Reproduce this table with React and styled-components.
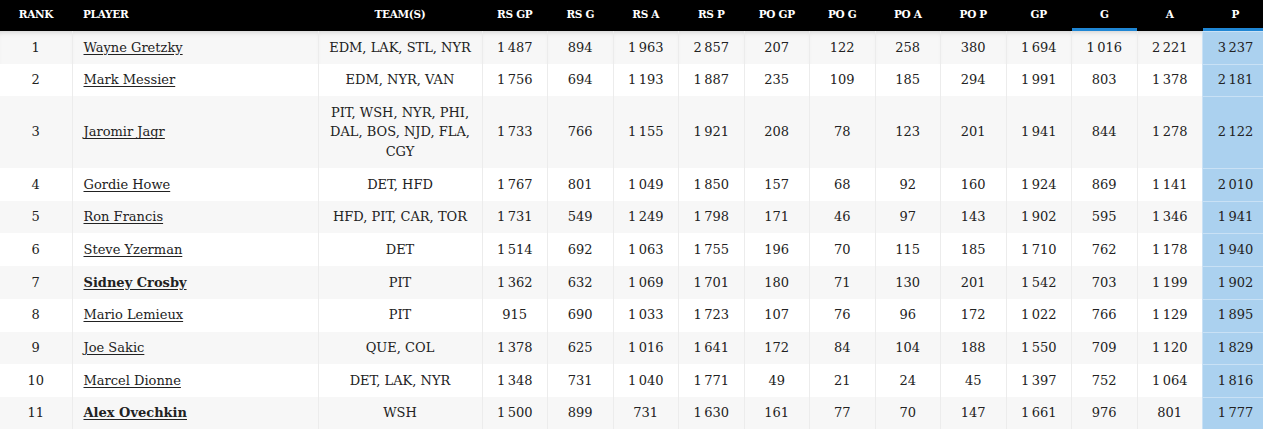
import React from "react";
import styled, { createGlobalStyle } from "styled-components";

const Global = createGlobalStyle`
  html, body { margin: 0; padding: 0; background: #fff; overflow: hidden; }
  body { font-family: "DejaVu Serif", "Liberation Serif", serif; color: #222; }
`;

const Wrap = styled.div`
  width: 1263px;
  overflow: hidden;
`;

const Table = styled.table`
  width: 1268px;
  table-layout: fixed;
  border-collapse: collapse;
  font-size: 13px;
`;

const HeadRow = styled.tr`
  background: #000;
`;

const HeadCell = styled.th`
  height: 31px;
  box-sizing: border-box;
  padding: 0 ${(p) => (p.$align === "left" ? "11px" : "4px")};
  color: #fff;
  font-size: 10.5px;
  line-height: 28px;
  font-weight: 700;
  letter-spacing: -0.3px;
  text-transform: uppercase;
  text-align: ${(p) => p.$align || "center"};
  vertical-align: top;
  border: none;
  box-shadow: ${(p) => (p.$accent ? "inset 0 -3px 0 #1f86d4" : "none")};
  white-space: nowrap;
`;

const BodyRow = styled.tr`
  background: ${(p) => (p.$odd ? "#f7f7f7" : "#fff")};
  ${(p) =>
    p.$first
      ? "& > td { box-shadow: inset 0 5px 6px -5px rgba(0,0,0,0.22); }"
      : ""}
`;

const Cell = styled.td`
  box-sizing: border-box;
  padding: 6.6px ${(p) => (p.$align === "left" ? "11px" : "8px")};
  line-height: 19.5px;
  text-align: ${(p) => p.$align || "center"};
  vertical-align: middle;
  border: none;
  border-left: 1px solid #ececec;
  &:first-child { border-left: none; }
  ${(p) =>
    p.$highlight
      ? "background: #abd1ef; border-left: 1px solid #c9e1f5; box-shadow: inset 0 1px 0 #c9e1f5 !important;"
      : ""}
`;

const PlayerLink = styled.a`
  color: #222;
  text-decoration: underline;
  text-underline-offset: 2px;
  font-weight: ${(p) => (p.$active ? 700 : 400)};
  cursor: pointer;
`;

const fmt = (n) => String(n).replace(/\B(?=(\d{3})+(?!\d))/g, "\u2009");

const columns = [
  "RS GP", "RS G", "RS A", "RS P", "PO GP", "PO G", "PO A", "PO P", "GP", "G", "A", "P",
];

const rows = [
  ["Wayne Gretzky", false, "EDM, LAK, STL, NYR", [1487, 894, 1963, 2857, 207, 122, 258, 380, 1694, 1016, 2221, 3237]],
  ["Mark Messier", false, "EDM, NYR, VAN", [1756, 694, 1193, 1887, 235, 109, 185, 294, 1991, 803, 1378, 2181]],
  ["Jaromir Jagr", false, "PIT, WSH, NYR, PHI, DAL, BOS, NJD, FLA, CGY", [1733, 766, 1155, 1921, 208, 78, 123, 201, 1941, 844, 1278, 2122]],
  ["Gordie Howe", false, "DET, HFD", [1767, 801, 1049, 1850, 157, 68, 92, 160, 1924, 869, 1141, 2010]],
  ["Ron Francis", false, "HFD, PIT, CAR, TOR", [1731, 549, 1249, 1798, 171, 46, 97, 143, 1902, 595, 1346, 1941]],
  ["Steve Yzerman", false, "DET", [1514, 692, 1063, 1755, 196, 70, 115, 185, 1710, 762, 1178, 1940]],
  ["Sidney Crosby", true, "PIT", [1362, 632, 1069, 1701, 180, 71, 130, 201, 1542, 703, 1199, 1902]],
  ["Mario Lemieux", false, "PIT", [915, 690, 1033, 1723, 107, 76, 96, 172, 1022, 766, 1129, 1895]],
  ["Joe Sakic", false, "QUE, COL", [1378, 625, 1016, 1641, 172, 84, 104, 188, 1550, 709, 1120, 1829]],
  ["Marcel Dionne", false, "DET, LAK, NYR", [1348, 731, 1040, 1771, 49, 21, 24, 45, 1397, 752, 1064, 1816]],
  ["Alex Ovechkin", true, "WSH", [1500, 899, 731, 1630, 161, 77, 70, 147, 1661, 976, 801, 1777]],
];

export default function App() {
  return (
    <Wrap>
      <Global />
      <Table>
        <colgroup>
          <col style={{ width: 72 }} />
          <col style={{ width: 246 }} />
          <col style={{ width: 164 }} />
          {columns.map((c) => (
            <col key={c} style={{ width: 65.5 }} />
          ))}
        </colgroup>
        <thead>
          <HeadRow>
            <HeadCell>Rank</HeadCell>
            <HeadCell $align="left">Player</HeadCell>
            <HeadCell>Team(s)</HeadCell>
            {columns.map((c) => (
              <HeadCell key={c} $accent={c === "G" || c === "P"}>
                {c}
              </HeadCell>
            ))}
          </HeadRow>
        </thead>
        <tbody>
          {rows.map(([name, active, teams, stats], i) => (
            <BodyRow key={name} $odd={i % 2 === 0} $first={i === 0}>
              <Cell>{i + 1}</Cell>
              <Cell $align="left">
                <PlayerLink $active={active}>{name}</PlayerLink>
              </Cell>
              <Cell>{teams}</Cell>
              {stats.map((v, j) => (
                <Cell key={j} $highlight={j === stats.length - 1}>
                  {fmt(v)}
                </Cell>
              ))}
            </BodyRow>
          ))}
        </tbody>
      </Table>
    </Wrap>
  );
}
